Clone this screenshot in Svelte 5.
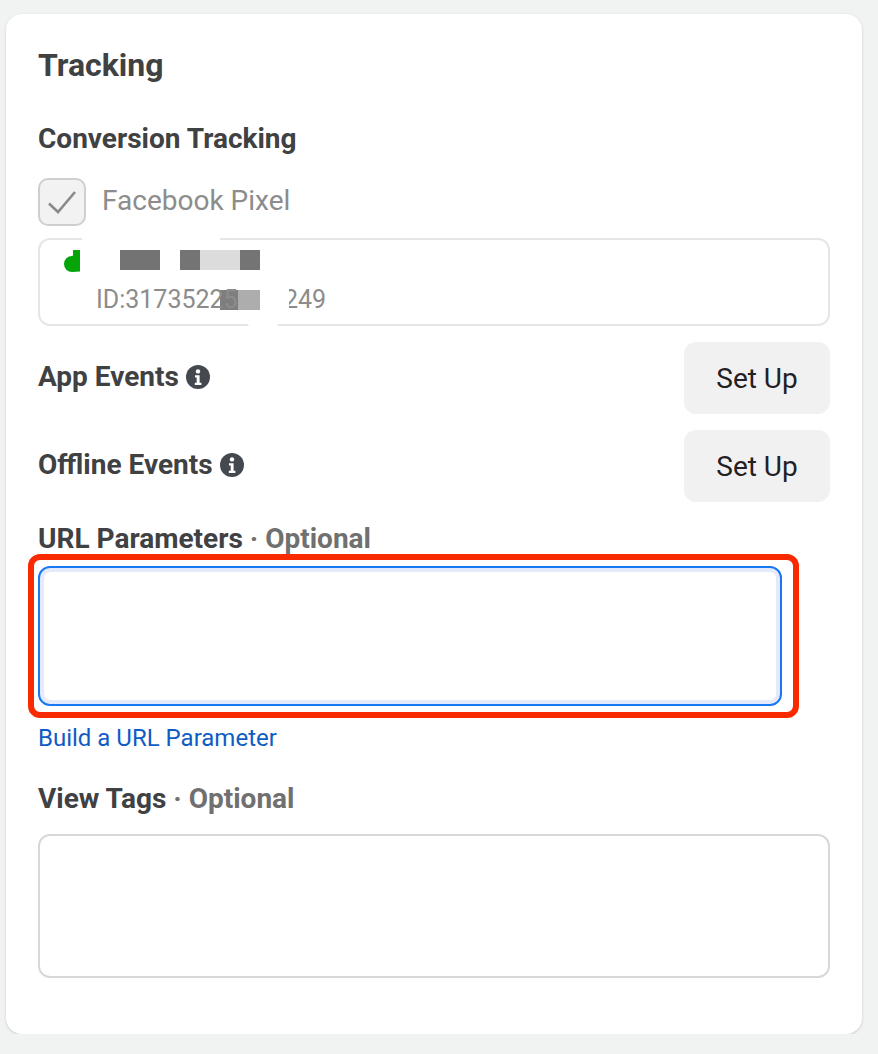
<script>
	const setups = [
		{ label: 'App Events' },
		{ label: 'Offline Events' }
	];
</script>

<div class="card">
	<h2>Tracking</h2>
	<h3 class="conv">Conversion Tracking</h3>

	<div class="pixel-check">
		<span class="box">
			<svg width="32" height="26" viewBox="0 0 32 26" fill="none">
				<path d="M3 14.5 L12 23 L29 3" stroke="#8a8a8a" stroke-width="2.6" />
			</svg>
		</span>
		<span class="pixel-label">Facebook Pixel</span>
	</div>

	<div class="pixel-card">
		<span class="mask mask-top"></span>
		<span class="mask mask-bottom"></span>
		<svg class="dot" width="16" height="22" viewBox="0 0 16 22">
			<path d="M9 0H16V21.5L8 22A8 8 0 0 1 8 6Q9 6 9 5Z" fill="#05a50a" />
		</svg>
		<span class="blur b1"></span>
		<span class="blur b2"></span>
		<span class="blur b3"></span>
		<span class="blur b4"></span>
		<span class="blur b5"></span>
		<span class="pixel-id">ID:31735225</span>
		<span class="blur b6"></span>
		<span class="pixel-id tail">249</span>
		<span class="mask mask-tail"></span>
	</div>

	{#each setups as row}
		<div class="setup-row">
			<div class="setup-label">
				<span>{row.label}</span>
				<svg class="info" width="24" height="24" viewBox="0 0 24 24">
					<circle cx="12" cy="12" r="12" fill="#444950" />
					<circle cx="12" cy="6.4" r="2.2" fill="#fff" />
					<path d="M9 10.2h4.6v7.6H15.4v2.2H8.8v-2.2h1.9v-5.4H9z" fill="#fff" />
				</svg>
			</div>
			<button class="setup-btn">Set Up</button>
		</div>
	{/each}

	<h3 class="url-title">URL Parameters <span class="opt">· Optional</span></h3>
	<div class="focus-wrap">
		<div class="annot"></div>
		<textarea class="input focused"></textarea>
	</div>
	<a class="link" href="#build">Build a URL Parameter</a>

	<h3 class="tags-title">View Tags <span class="opt">· Optional</span></h3>
	<textarea class="input tags"></textarea>
</div>

<style>
	:global(body) {
		background: #f1f3f2;
		font-family: Roboto, "Liberation Sans", sans-serif;
	}

	.card {
		box-sizing: border-box;
		width: 856px;
		height: 1020px;
		margin: 14px 0 0 6px;
		padding: 32px 32px 0;
		background: #fff;
		border-radius: 16px;
		box-shadow: 0 1px 3px rgba(0, 0, 0, 0.16);
		color: #404143;
	}

	h2 {
		margin: 0;
		font-size: 32px;
		line-height: 38px;
		font-weight: 700;
	}

	h3 {
		margin: 0;
		font-size: 28px;
		line-height: 32px;
		font-weight: 700;
	}

	.conv {
		margin-top: 39px;
	}

	.pixel-check {
		display: flex;
		align-items: center;
		gap: 16px;
		margin-top: 23px;
	}

	.box {
		box-sizing: border-box;
		width: 48px;
		height: 48px;
		display: flex;
		align-items: center;
		justify-content: center;
		background: #f2f2f2;
		border: 2px solid #cfcfcf;
		border-radius: 10px;
	}

	.pixel-label {
		margin-bottom: 4px;
		font-size: 28px;
		color: #8c8c8c;
	}

	.pixel-card {
		position: relative;
		box-sizing: border-box;
		width: 792px;
		height: 88px;
		margin-top: 12px;
		border: 2px solid #e6e6e6;
		border-radius: 12px;
	}

	.mask {
		position: absolute;
		background: #fff;
	}

	.mask-top {
		left: 42px;
		top: -3px;
		width: 138px;
		height: 5px;
	}

	.mask-bottom {
		left: 208px;
		top: 83px;
		width: 30px;
		height: 6px;
		border-radius: 0 0 10px 10px;
	}

	.mask-tail {
		left: 240px;
		top: 46px;
		width: 9px;
		height: 28px;
	}

	.dot {
		position: absolute;
		left: 24px;
		top: 10px;
	}

	.blur {
		position: absolute;
		height: 20px;
		top: 10px;
	}

	.b1 { left: 80px; width: 40px; background: #737373; }
	.b2 { left: 140px; width: 20px; background: #747474; }
	.b3 { left: 160px; width: 40px; background: #dcdcdc; }
	.b4 { left: 200px; width: 20px; background: #747474; }
	.b5 { left: 180px; width: 20px; top: 50px; background: #7e7e7e; }
	.b6 { left: 198px; width: 22px; top: 50px; background: #adadad; }

	.pixel-id {
		position: absolute;
		left: 56px;
		top: 46px;
		font-size: 25px;
		line-height: 28px;
		color: #8c8c8c;
	}

	.tail {
		left: 244px;
	}

	.setup-row {
		display: flex;
		justify-content: space-between;
		align-items: flex-start;
		height: 72px;
		margin-top: 16px;
	}

	.setup-label {
		display: flex;
		align-items: center;
		gap: 7px;
		margin-top: 19px;
		font-size: 28px;
		line-height: 32px;
		font-weight: 700;
	}

	.setup-btn {
		width: 146px;
		height: 72px;
		border: none;
		border-radius: 12px;
		background: #f1f1f1;
		color: #1f2126;
		font-family: inherit;
		font-size: 28px;
	}

	.url-title {
		margin-top: 21px;
	}

	.opt {
		color: #707070;
	}

	.focus-wrap {
		position: relative;
		width: 744px;
		height: 140px;
		margin-top: 11px;
	}

	.annot {
		position: absolute;
		left: -10px;
		top: -12px;
		width: 771px;
		height: 164px;
		box-sizing: border-box;
		border: 6px solid #fa2a00;
		border-radius: 12px;
		pointer-events: none;
	}

	.input {
		display: block;
		box-sizing: border-box;
		padding: 0;
		margin: 0;
		background: #fff;
		resize: none;
		outline: none;
		border-radius: 12px;
	}

	.focused {
		width: 744px;
		height: 140px;
		border: 2px solid #1877f2;
		box-shadow: inset 0 0 0 4px #e4eaf9;
	}

	.link {
		display: block;
		margin-top: 17px;
		font-size: 24px;
		line-height: 30px;
		color: #0f5cc5;
		text-decoration: none;
	}

	.tags-title {
		margin-top: 30px;
	}

	.tags {
		width: 792px;
		height: 144px;
		margin-top: 19px;
		border: 2px solid #d8d8d8;
	}
</style>
